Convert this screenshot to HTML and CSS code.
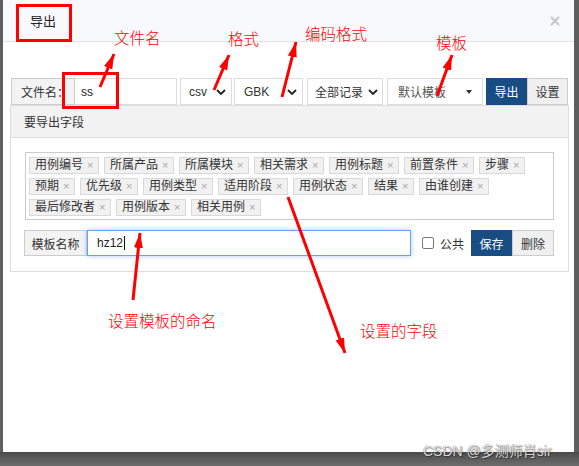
FILE: index.html
```html
<!DOCTYPE html>
<html lang="zh-CN">
<head>
<meta charset="utf-8">
<title>导出</title>
<link rel="stylesheet" href="styles.css">
</head>
<body>
<div class="screen">
  <div class="modal">
    <div class="modal-header">
      <span class="modal-title">导出</span>
      <svg class="modal-close" width="10" height="10" viewBox="0 0 10 10"><path d="M1 1L9 9M9 1L1 9"/></svg>
    </div>
    <div class="modal-body">
      <div class="toolbar">
        <span class="addon addon-file">文件名：</span>
        <span class="field field-file">ss</span>
        <span class="select sel-csv">csv<svg class="chev" width="10" height="6" viewBox="0 0 10 6"><path d="M1 1L5 5L9 1"/></svg></span>
        <span class="select sel-enc">GBK<svg class="chev" width="10" height="6" viewBox="0 0 10 6"><path d="M1 1L5 5L9 1"/></svg></span>
        <span class="select sel-range">全部记录<svg class="chev" width="10" height="6" viewBox="0 0 10 6"><path d="M1 1L5 5L9 1"/></svg></span>
        <span class="select sel-tpl">默认模板<span class="caret"></span></span>
        <button class="btn btn-primary btn-export">导出</button>
        <button class="btn btn-default btn-setup">设置</button>
      </div>
      <div class="panel">
        <div class="panel-head">要导出字段</div>
        <div class="panel-body">
          <div class="tag-box">
            <span class="tag">用例编号<i class="x">×</i></span>
            <span class="tag">所属产品<i class="x">×</i></span>
            <span class="tag">所属模块<i class="x">×</i></span>
            <span class="tag">相关需求<i class="x">×</i></span>
            <span class="tag">用例标题<i class="x">×</i></span>
            <span class="tag">前置条件<i class="x">×</i></span>
            <span class="tag">步骤<i class="x">×</i></span>
            <span class="tag">预期<i class="x">×</i></span>
            <span class="tag">优先级<i class="x">×</i></span>
            <span class="tag">用例类型<i class="x">×</i></span>
            <span class="tag">适用阶段<i class="x">×</i></span>
            <span class="tag">用例状态<i class="x">×</i></span>
            <span class="tag">结果<i class="x">×</i></span>
            <span class="tag">由谁创建<i class="x">×</i></span>
            <span class="tag">最后修改者<i class="x">×</i></span>
            <span class="tag">用例版本<i class="x">×</i></span>
            <span class="tag">相关用例<i class="x">×</i></span>
          </div>
          <div class="tpl-row">
            <span class="addon addon-tpl">模板名称</span>
            <span class="field field-tpl">hz12<span class="cursor"></span></span>
            <span class="check"><span class="check-box"></span>公共</span>
            <button class="btn btn-primary btn-save">保存</button>
            <button class="btn btn-default btn-del">删除</button>
          </div>
        </div>
      </div>
    </div>
  </div>
  <div class="taskbar"></div>

  <!-- red callouts drawn over the dialog -->
  <div class="mark mark-title"></div>
  <div class="mark mark-file"></div>
  <svg class="arrows" width="579" height="466" viewBox="0 0 579 466">
    <defs>
      <marker id="head" markerUnits="userSpaceOnUse" markerWidth="16" markerHeight="10" refX="15" refY="4.5" orient="auto">
        <path d="M0 0L15 4.5L0 9z" fill="#f00"/>
      </marker>
    </defs>
    <line x1="100" y1="87" x2="114" y2="54" marker-end="url(#head)"/>
    <line x1="214" y1="90" x2="229" y2="55" marker-end="url(#head)"/>
    <line x1="282" y1="97" x2="296" y2="42" marker-end="url(#head)"/>
    <line x1="437" y1="96" x2="452" y2="55" marker-end="url(#head)"/>
    <line x1="133" y1="300" x2="140" y2="233" marker-end="url(#head)"/>
    <line x1="288" y1="197" x2="345" y2="353" marker-end="url(#head)"/>
  </svg>
  <span class="note note-file">文件名</span>
  <span class="note note-fmt">格式</span>
  <span class="note note-enc">编码格式</span>
  <span class="note note-tpl">模板</span>
  <span class="note note-name">设置模板的命名</span>
  <span class="note note-fields">设置的字段</span>

  <span class="watermark">CSDN @多测师肖sir</span>
</div>
</body>
</html>
```

FILE: styles.css
```css
* { box-sizing: border-box; }

html, body { margin: 0; padding: 0; }

body {
  width: 579px;
  height: 466px;
  overflow: hidden;
  background: #5e5e5e;
  font-family: "Liberation Sans", "Noto Sans CJK SC", sans-serif;
  font-size: 12px;
  color: #333;
}

.screen {
  position: relative;
  width: 579px;
  height: 466px;
  display: flex;
  flex-direction: column;
}

/* dialog */
.modal {
  margin-left: 3px;
  width: 571px;
  height: 452px;
  background: #fff;
  flex: none;
}

.modal-header {
  height: 42px;
  background: #f8f9fc;
  border-bottom: 1px solid #e2e4e8;
  display: flex;
  align-items: center;
  justify-content: space-between;
  padding: 0 14px 0 27px;
}

.modal-title {
  font-size: 13px;
  color: #222;
}

.modal-close path {
  stroke: #c4c6ca;
  stroke-width: 2;
  fill: none;
}

.modal-body {
  padding: 36px 5px 0 7px;
}

/* export toolbar */
.toolbar {
  display: flex;
  height: 27px;
  margin-left: 1px;
}

.addon {
  display: flex;
  align-items: center;
  justify-content: center;
  background: #f3f3f3;
  border: 1px solid #ccc;
  color: #333;
}

.addon-file { width: 64px; padding-left: 4px; }

.field {
  display: flex;
  align-items: center;
  background: #fff;
  border: 1px solid #ddd;
  color: #222;
}

.field-file { width: 102px; padding-left: 6px; border-left: none; }

.select {
  display: flex;
  align-items: center;
  justify-content: space-between;
  background: #fff;
  border: 1px solid #ddd;
  color: #333;
  padding: 0 5px 0 8px;
}

.chev path {
  stroke: #222;
  stroke-width: 1.8;
  fill: none;
}

.sel-csv { width: 52px; margin-left: 3px; }
.sel-enc { width: 69px; margin-left: 2px; padding-left: 9px; }
.sel-range { width: 76px; margin-left: 4px; padding-left: 7px; padding-right: 4px; }
.sel-tpl { width: 96px; margin-left: 4px; padding: 0 10px 0 10px; color: #555; }

.caret {
  width: 0;
  height: 0;
  border-top: 4px solid #333;
  border-left: 3.5px solid transparent;
  border-right: 3.5px solid transparent;
}

.btn {
  font-family: "Liberation Sans", "Noto Sans CJK SC", sans-serif;
  font-size: 12px;
  padding: 0;
  margin: 0;
  border: 1px solid #ccc;
  cursor: pointer;
}

.btn-primary {
  background: #174d82;
  border-color: #174d82;
  color: #fff;
}

.btn-default {
  background: #f0f0f0;
  color: #333;
}

.btn-export { width: 41px; margin-left: 3px; }
.btn-setup { width: 41px; }

/* field panel */
.panel {
  border: 1px solid #ddd;
}

.panel-head {
  height: 32px;
  background: #f2f2f2;
  border-bottom: 1px solid #ddd;
  padding-left: 13px;
  display: flex;
  align-items: center;
  font-size: 12px;
  color: #333;
}

.panel-body {
  padding: 14px 14px 15px 14px;
}

.tag-box {
  height: 68px;
  border: 1px solid #ccc;
  padding: 4px 3px 3px 3px;
  display: flex;
  flex-wrap: wrap;
  align-content: flex-start;
  column-gap: 5px;
  row-gap: 4px;
}

.tag {
  display: flex;
  align-items: center;
  height: 17px;
  padding: 0 5px 0 5px;
  background: #f1f1f1;
  border: 1px solid #d9d9d9;
  color: #333;
  line-height: 15px;
}

.tag .x {
  font-style: normal;
  display: inline-block;
  width: 6px;
  margin-left: 4px;
  text-align: center;
  color: #a8a8a8;
  font-size: 11px;
}

.tpl-row {
  display: flex;
  height: 26px;
  margin-top: 10px;
  margin-left: -1px;
}

.addon-tpl { width: 63px; }

.field-tpl {
  flex: 1;
  padding-left: 9px;
  border-color: #66a3ee;
  box-shadow: 0 0 5px rgba(102, 160, 238, 0.55);
  font-size: 12px;
}

.cursor {
  display: inline-block;
  width: 1px;
  height: 14px;
  margin-left: 1px;
  background: #111;
}

.check {
  width: 60px;
  display: flex;
  align-items: center;
  padding-left: 11px;
  color: #333;
}

.check-box {
  width: 12px;
  height: 12px;
  border: 1px solid #777;
  border-radius: 2px;
  background: #fff;
  margin-right: 6px;
}

.btn-save { width: 41px; }
.btn-del { width: 42px; }

/* screen strip under the dialog */
.taskbar {
  flex: 1;
  background: linear-gradient(#4a4a4a, #5a5a5a 40%, #6c6c6c);
}

/* red callouts */
.mark {
  position: absolute;
  border: 3px solid #f00;
}

.mark-title { left: 16px; top: 4px; width: 56px; height: 38px; }
.mark-file { left: 62px; top: 72px; width: 57px; height: 37px; }

.arrows {
  position: absolute;
  left: 0;
  top: 0;
  pointer-events: none;
}

.arrows line {
  stroke: #f00;
  stroke-width: 3;
}

.note {
  position: absolute;
  font-family: "Noto Sans CJK SC", sans-serif;
  font-weight: 300;
  font-size: 15.5px;
  line-height: 16px;
  color: #f00;
  white-space: nowrap;
}

.note-file { left: 114px; top: 29px; }
.note-fmt { left: 228px; top: 30px; }
.note-enc { left: 305px; top: 25px; }
.note-tpl { left: 436px; top: 34px; }
.note-name { left: 108px; top: 312px; }
.note-fields { left: 360px; top: 322px; }

.watermark {
  position: absolute;
  left: 423px;
  top: 440px;
  font-family: "Liberation Sans", "Noto Sans CJK SC", sans-serif;
  font-size: 14px;
  color: rgba(235, 235, 235, 0.92);
  text-shadow: 0 0 1px rgba(0, 0, 0, 0.6), 1px 1px 1px rgba(0, 0, 0, 0.35);
  white-space: nowrap;
}
```
